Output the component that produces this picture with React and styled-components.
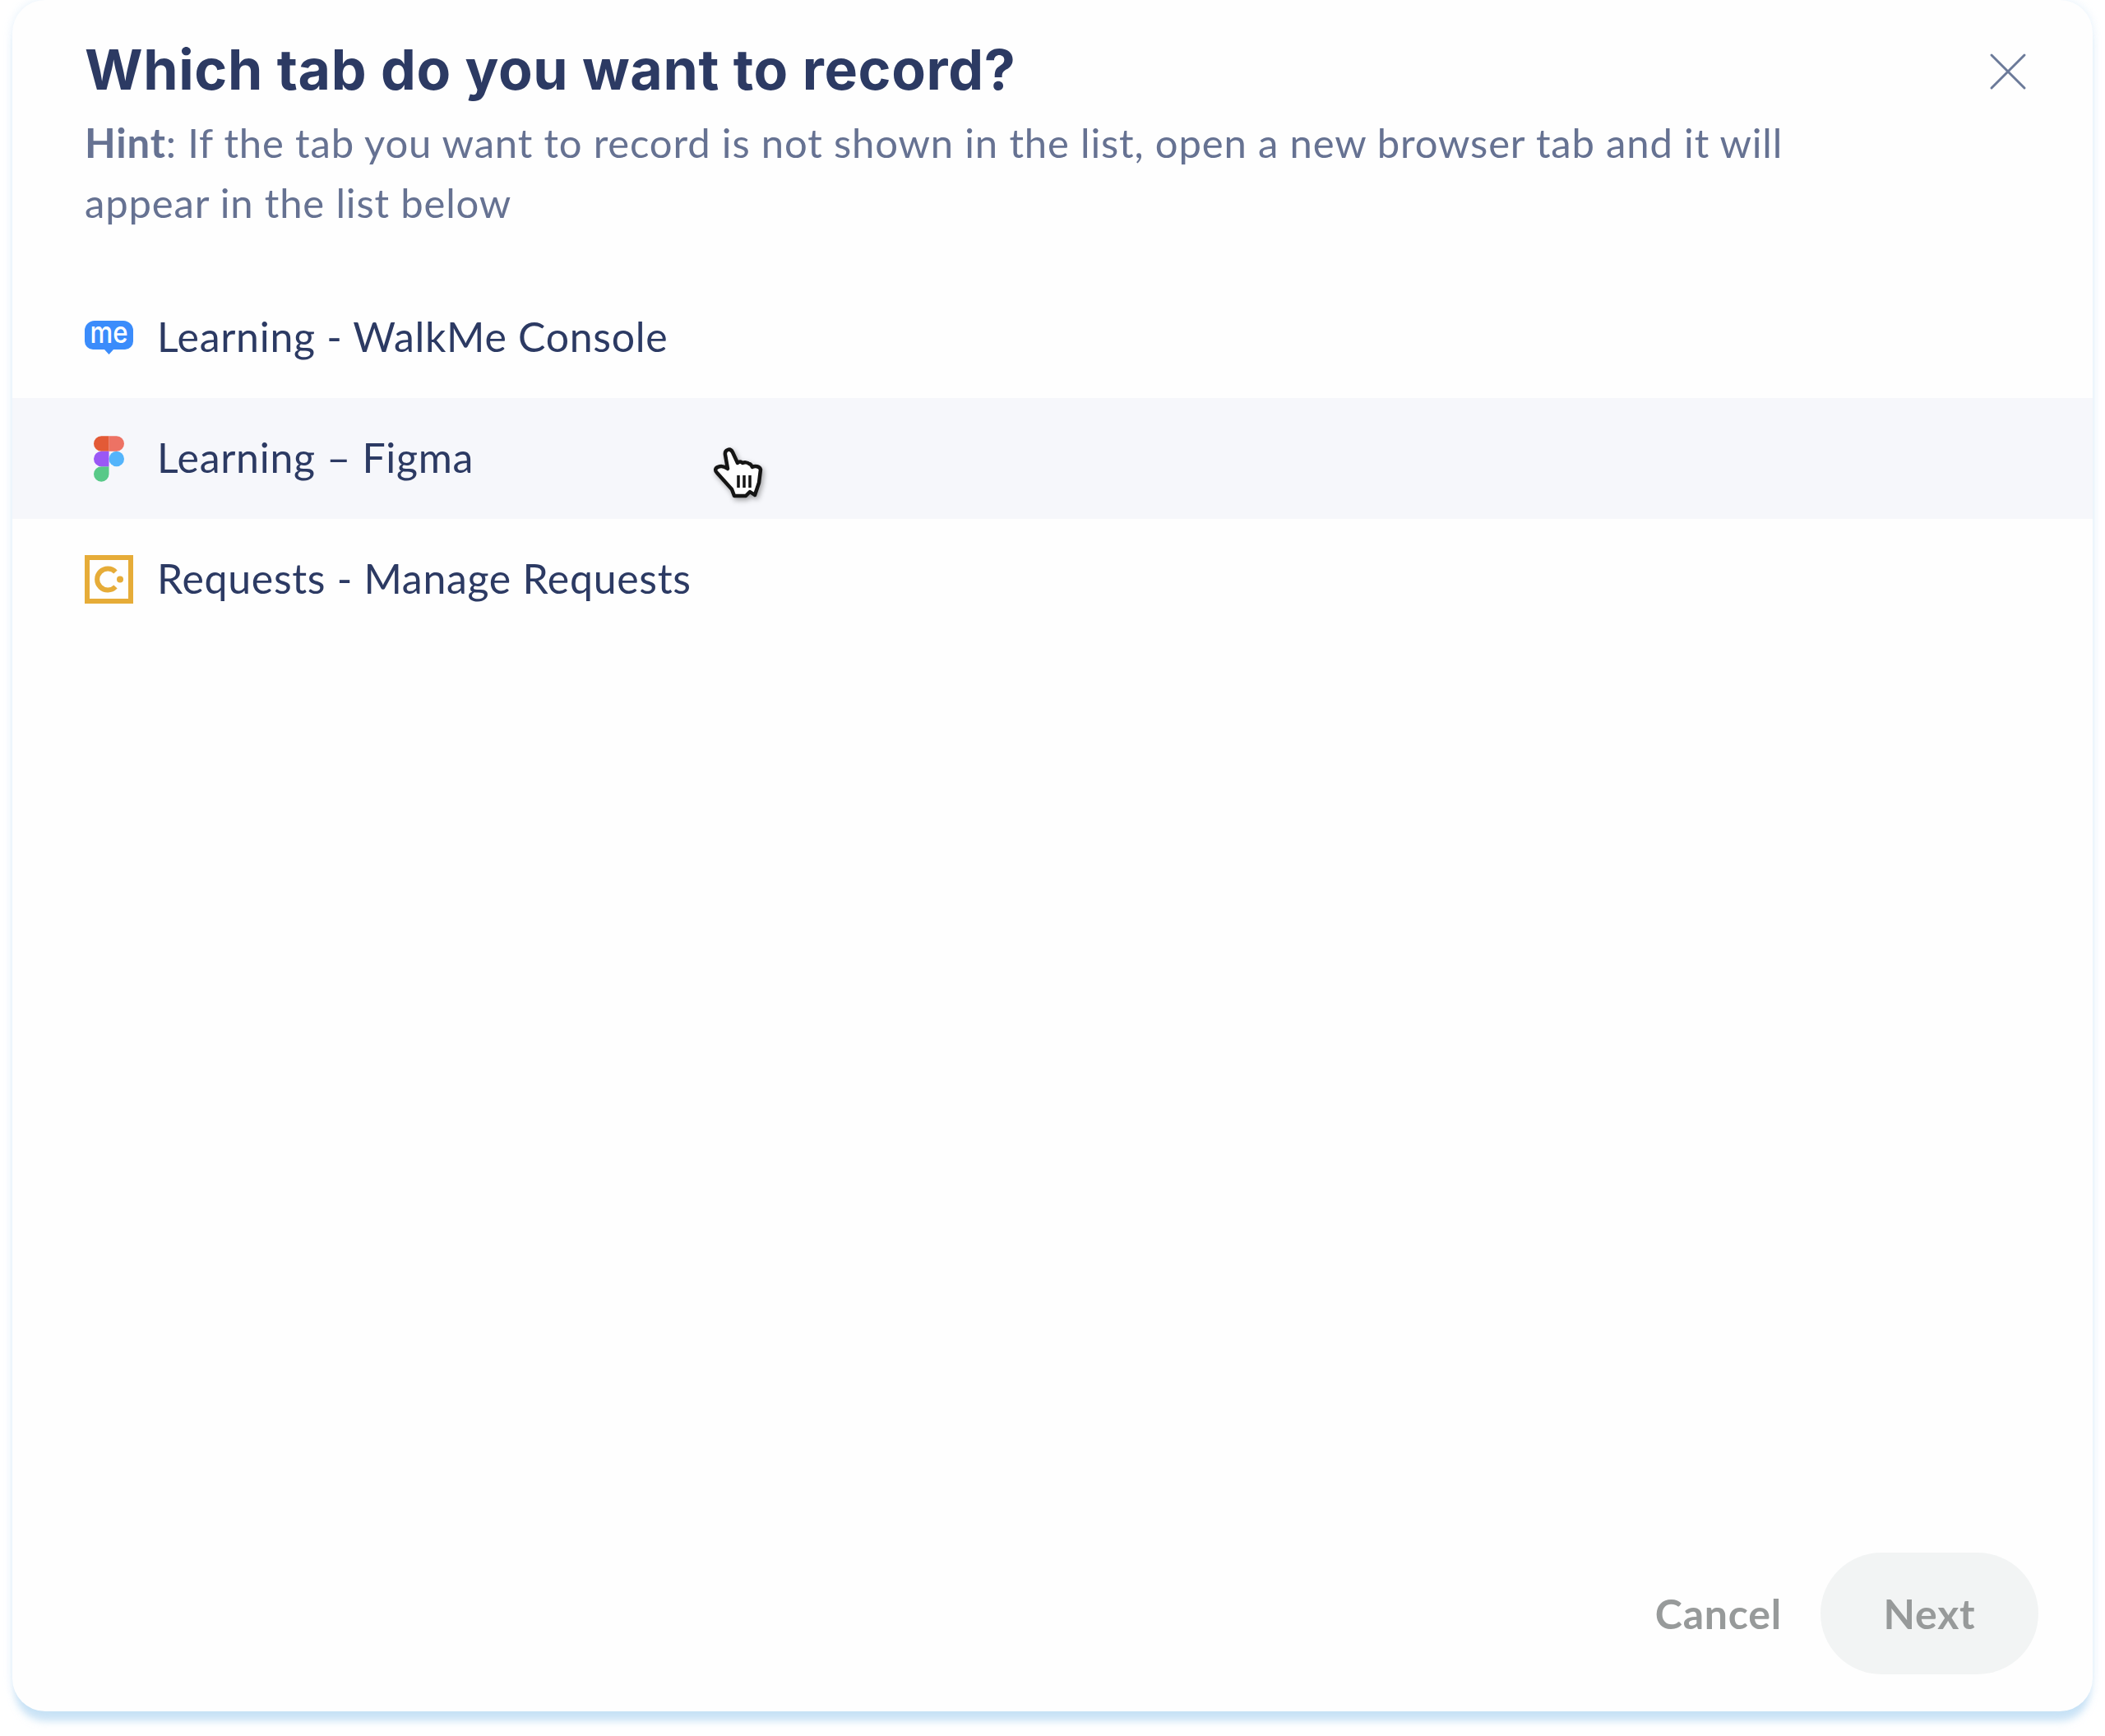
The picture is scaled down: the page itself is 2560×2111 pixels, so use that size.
import React from 'react'
import styled, { createGlobalStyle } from 'styled-components'

const GlobalStyle = createGlobalStyle`
  html, body {
    margin: 0;
    padding: 0;
    background: #fff;
  }
  * {
    box-sizing: border-box;
  }
`

const tabs = [
  { name: 'Learning - WalkMe Console', icon: 'walkme' },
  { name: 'Learning – Figma', icon: 'figma', hovered: true },
  { name: 'Requests - Manage Requests', icon: 'requests' },
]

const WalkMeIcon = () => (
  <svg width="59" height="41" viewBox="0 0 59 41">
    <path
      d="M12 0h35a12 12 0 0 1 12 12v13a10 10 0 0 1-10 10H35l-5.500 6-5.500-6H10A10 10 0 0 1 0 25V12A12 12 0 0 1 12 0z"
      fill="#3b8cfb"
    />
    <text
      x="29.500"
      y="27"
      textAnchor="middle"
      textLength="46"
      lengthAdjust="spacingAndGlyphs"
      fontFamily="Inter, sans-serif"
      fontSize="36"
      fontWeight="500"
      fill="#fff"
    >
      me
    </text>
  </svg>
)

const FigmaIcon = () => (
  <svg width="37" height="56" viewBox="0 0 38 57">
    <path d="M19 28.500a9.500 9.500 0 1 1 19 0 9.500 9.500 0 0 1-19 0z" fill="#53b4fb" />
    <path d="M0 47.500A9.500 9.500 0 0 1 9.500 38H19v9.500a9.500 9.500 0 1 1-19 0z" fill="#58c988" />
    <path d="M19 0v19h9.500a9.500 9.500 0 1 0 0-19H19z" fill="#ed7264" />
    <path d="M0 9.500A9.500 9.500 0 0 0 9.500 19H19V0H9.500A9.500 9.500 0 0 0 0 9.500z" fill="#e35a36" />
    <path d="M0 28.500A9.500 9.500 0 0 0 9.500 38H19V19H9.500A9.500 9.500 0 0 0 0 28.500z" fill="#9a58f5" />
  </svg>
)

const RequestsIcon = () => (
  <svg width="59" height="59" viewBox="0 0 59 59">
    <rect x="3" y="3" width="53" height="53" fill="none" stroke="#e6ac38" strokeWidth="6" />
    <path d="M37.500 20.500a13 13 0 1 0 0 18" fill="none" stroke="#e6ac38" strokeWidth="6" />
    <circle cx="43" cy="29.500" r="4" fill="#e6ac38" />
  </svg>
)

const icons = { walkme: WalkMeIcon, figma: FigmaIcon, requests: RequestsIcon }

const HandCursor = () => (
  <svg width="62" height="64" viewBox="0 0 62 64">
    <path
      d="M18 26 L15 9 C14 3 21 0 24 6 L30 19 C32 17 34 17 36 19 C38 18 42 18 44 20 C46 20 47 22 48 24 C51 22 57 23 58 27 L56 43 L51 58 L45 54 L40 59 L26 59 L23 51 L5 31 C2 28 3 25 6 24 C10 22 14 23 18 26 Z"
      fill="#fff"
      stroke="#151515"
      strokeWidth="4.500"
      strokeLinejoin="round"
    />
    <path d="M31 34v15M38 34v15M45 34v15" stroke="#151515" strokeWidth="3.500" fill="none" />
  </svg>
)

export default function App() {
  return (
    <>
      <GlobalStyle />
      <Page>
        <Dialog>
          <Header>
            <Heading>
              <Title>Which tab do you want to record?</Title>
              <Hint>
                <b>Hint</b>: If the tab you want to record is not shown in the list, open a new browser tab and it will
                appear in the list below
              </Hint>
            </Heading>
            <CloseButton aria-label="Close">
              <svg width="46" height="46" viewBox="0 0 46 46">
                <path d="M3 3l40 40M43 3L3 43" stroke="#6b7a99" strokeWidth="3" strokeLinecap="round" fill="none" />
              </svg>
            </CloseButton>
          </Header>
          <TabList>
            {tabs.map((tab) => {
              const Icon = icons[tab.icon]
              return (
                <TabRow key={tab.name} $hovered={tab.hovered}>
                  <IconSlot>
                    <Icon />
                  </IconSlot>
                  <TabName>{tab.name}</TabName>
                  {tab.hovered && (
                    <Cursor>
                      <HandCursor />
                    </Cursor>
                  )}
                </TabRow>
              )
            })}
          </TabList>
          <Footer>
            <CancelButton>Cancel</CancelButton>
            <NextButton disabled>Next</NextButton>
          </Footer>
        </Dialog>
      </Page>
    </>
  )
}

const Page = styled.div`
  width: 2560px;
  height: 2111px;
  padding: 0 15px;
`

const Dialog = styled.div`
  height: 2081px;
  display: flex;
  flex-direction: column;
  background: #fefefe;
  border-radius: 40px;
  box-shadow: 0 16px 10px -4px rgba(170, 210, 240, 0.6), 0 0 12px rgba(190, 220, 245, 0.4);
`

const Header = styled.div`
  display: flex;
  justify-content: space-between;
  padding: 39px 80px 0 88px;
`

const Heading = styled.div`
  width: 2120px;
`

const Title = styled.h1`
  margin: 0 0 8px;
  font-family: Inter, "Liberation Sans", sans-serif;
  font-size: 68px;
  line-height: 90px;
  font-weight: 700;
  letter-spacing: 0.65px;
  color: #2c3a63;
`

const Hint = styled.p`
  margin: 0;
  font-family: Lato, "Liberation Sans", sans-serif;
  font-size: 49px;
  line-height: 73px;
  letter-spacing: 0.83px;
  color: #667292;
  b {
    font-weight: 700;
  }
`

const CloseButton = styled.button`
  width: 46px;
  height: 46px;
  margin-top: 25px;
  padding: 0;
  border: none;
  background: none;
`

const TabList = styled.div`
  display: flex;
  flex-direction: column;
  margin-top: 54px;
`

const TabRow = styled.div`
  position: relative;
  height: 147px;
  display: flex;
  align-items: center;
  padding-left: 88px;
  background: ${(p) => (p.$hovered ? '#f6f7fb' : 'transparent')};
`

const IconSlot = styled.div`
  width: 59px;
  display: flex;
  justify-content: center;
  margin-right: 29px;
`

const TabName = styled.span`
  margin-bottom: 3px;
  font-family: Lato, "Liberation Sans", sans-serif;
  font-size: 50px;
  letter-spacing: 0.7px;
  color: #2c3a63;
`

const Cursor = styled.div`
  position: absolute;
  left: 852px;
  top: 60px;
  display: flex;
  filter: drop-shadow(2px 3px 3px rgba(0, 0, 0, 0.35));
`

const Footer = styled.div`
  margin-top: auto;
  padding: 0 66px 45px 0;
  display: flex;
  justify-content: flex-end;
  align-items: center;
  gap: 47px;
`

const CancelButton = styled.button`
  padding: 0;
  border: none;
  background: none;
  font-family: Lato, "Liberation Sans", sans-serif;
  font-size: 50px;
  font-weight: 700;
  letter-spacing: 0.8px;
  color: #979a9a;
`

const NextButton = styled.button`
  width: 265px;
  height: 148px;
  padding: 0;
  border: none;
  border-radius: 74px;
  background: #f2f4f4;
  font-family: Lato, "Liberation Sans", sans-serif;
  font-size: 50px;
  font-weight: 700;
  letter-spacing: 0.8px;
  color: #979a9a;
`
